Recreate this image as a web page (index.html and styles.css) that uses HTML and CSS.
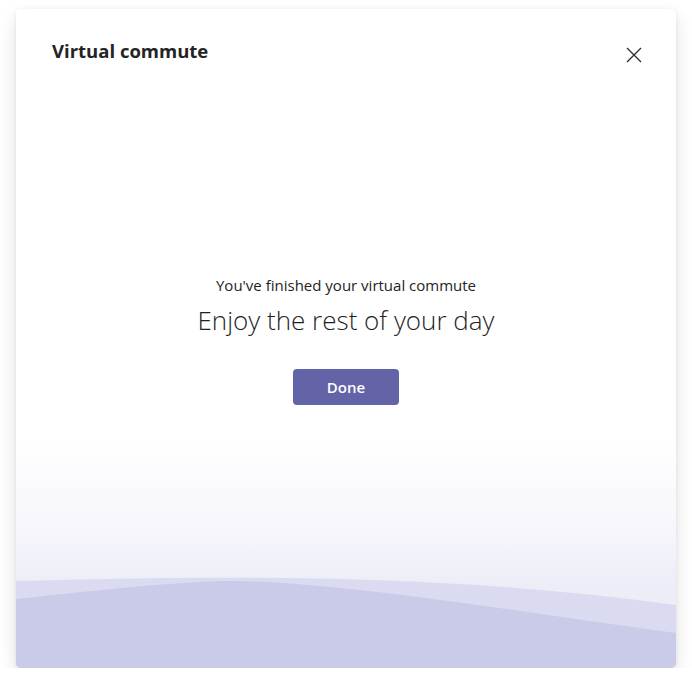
FILE: index.html
```html
<!DOCTYPE html>
<html lang="en">
<head>
<meta charset="utf-8">
<title>Virtual commute</title>
<link rel="stylesheet" href="styles.css">
</head>
<body>
<div class="page">
  <div class="card">
    <div class="header">
      <h1 class="title">Virtual commute</h1>
      <button class="close" aria-label="Close">
        <svg width="16" height="16" viewBox="0 0 16 16"><path d="M1 1 L15 15 M15 1 L1 15" stroke="#2b2b2b" stroke-width="1.3" fill="none"/></svg>
      </button>
    </div>
    <div class="content">
      <p class="sub">You've finished your virtual commute</p>
      <p class="big">Enjoy the rest of your day</p>
      <button class="done">Done</button>
    </div>
    <svg class="waves" viewBox="0 0 660 92" preserveAspectRatio="none">
      <path d="M0 5 C 200 0, 420 -4, 660 29 L660 92 L0 92 Z" fill="#dadbf0"/>
      <path d="M0 23 C 90 13, 170 5, 220 5 C 320 6, 480 32, 660 57 L660 92 L0 92 Z" fill="#cacae9"/>
    </svg>
  </div>
</div>
</body>
</html>
```

FILE: styles.css
```css
html, body {
  margin: 0;
  padding: 0;
  background: #ffffff;
}
.page {
  padding: 9px 16px 0 16px;
  font-family: "Open Sans", "Noto Sans", sans-serif;
  color: #242424;
}
.card {
  width: 660px;
  height: 659px;
  border-radius: 5px;
  overflow: hidden;
  display: flex;
  flex-direction: column;
  background: linear-gradient(to bottom, #ffffff 0px, #ffffff 430px, #f6f6fc 520px, #ededf8 575px);
  box-shadow: 0 1px 4px rgba(0,0,0,0.08), 0 8px 20px rgba(0,0,0,0.11);
}
.header {
  display: flex;
  justify-content: space-between;
  align-items: flex-start;
  padding: 29px 34px 0 36px;
}
.title {
  margin: 0;
  font-size: 18.5px;
  line-height: 26px;
  font-weight: 700;
  color: #242424;
}
.close {
  border: 0;
  background: none;
  padding: 0;
  margin-top: 9px;
  width: 16px;
  height: 16px;
  display: flex;
}
.content {
  flex: 1;
  display: flex;
  flex-direction: column;
  align-items: center;
  padding-top: 211px;
}
.sub {
  margin: 0;
  font-size: 15px;
  line-height: 20px;
  color: #242424;
}
.big {
  margin: 8px 0 0 0;
  font-size: 26px;
  line-height: 34px;
  font-weight: 300;
  color: #1f1f1f;
}
.done {
  margin-top: 32px;
  width: 106px;
  height: 36px;
  border: 0;
  border-radius: 4px;
  background: #6264a7;
  color: #ffffff;
  font-family: "Open Sans", "Noto Sans", sans-serif;
  font-size: 15px;
  font-weight: 600;
}
.waves {
  display: block;
  width: 660px;
  height: 92px;
  flex: none;
}
```
